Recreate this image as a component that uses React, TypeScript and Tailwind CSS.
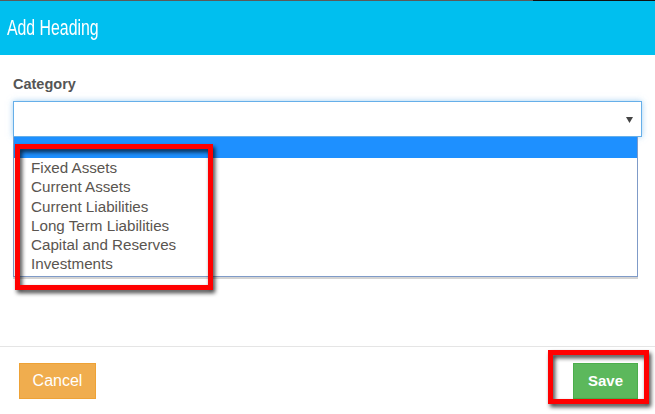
import React from "react";

const options = [
  "Fixed Assets",
  "Current Assets",
  "Current Liabilities",
  "Long Term Liabilities",
  "Capital and Reserves",
  "Investments",
];

export default function App() {
  return (
    <div className="relative w-[655px] h-[414px] overflow-hidden bg-white font-['Liberation_Sans',Arial,sans-serif]">
      {/* top strip */}
      <div className="flex h-px">
        <div className="w-[533px] bg-[#5a5a5a]" />
        <div className="flex-1 bg-[#111]" />
      </div>

      {/* header */}
      <div className="flex h-[54px] items-center bg-[#00bfef] pl-[7px]">
        <span className="inline-block origin-left scale-x-[0.72] text-[22px] leading-none text-white">
          Add Heading
        </span>
      </div>

      {/* body */}
      <div className="h-[291px] px-[13px] pt-[19px]">
        <div className="text-[14.5px] font-bold leading-[20px] text-[#555]">Category</div>
        <div className="mt-[7px] flex h-[36px] items-center justify-end border border-[#66afe9] bg-white pr-[8px] shadow-[0_0_6px_rgba(102,175,233,0.6)]">
          <svg width="7" height="6" viewBox="0 0 7 6" className="mt-[1px]">
            <polygon points="0,0 7,0 3.5,6" fill="#444" />
          </svg>
        </div>
      </div>

      {/* footer */}
      <div className="flex items-start justify-between border-t border-[#e5e5e5] pl-[19px] pr-[17px] pt-[16px]">
        <button className="h-[36px] w-[77px] border border-[#eea236] bg-[#f0ad4e] text-[16px] text-white">
          Cancel
        </button>
        <button className="h-[36px] w-[65px] border border-[#4cae4c] bg-[#5cb85c] text-[15px] font-bold text-white">
          Save
        </button>
      </div>

      {/* open dropdown list */}
      <div className="absolute left-[13px] top-[137px] w-[625px] border-x border-b border-[#7f9bc8] bg-white pb-[2px] shadow-[0_2px_0_#d4d4d4]">
        <div className="h-[21px] bg-[#1e90ff]" />
        {options.map((o) => (
          <div key={o} className="pl-[17px] text-[15.2px] leading-[19.3px] text-[#5a5550]">
            {o}
          </div>
        ))}
      </div>

      {/* annotation boxes */}
      <div className="absolute left-[15px] top-[144px] h-[146px] w-[198px] border-[5px] border-[#ff0000] drop-shadow-[2px_3px_2px_rgba(0,0,0,0.75)]" />
      <div className="absolute left-[548px] top-[350px] h-[54px] w-[101px] border-[5px] border-[#ff0000] drop-shadow-[2px_3px_2px_rgba(0,0,0,0.75)]" />
    </div>
  );
}
